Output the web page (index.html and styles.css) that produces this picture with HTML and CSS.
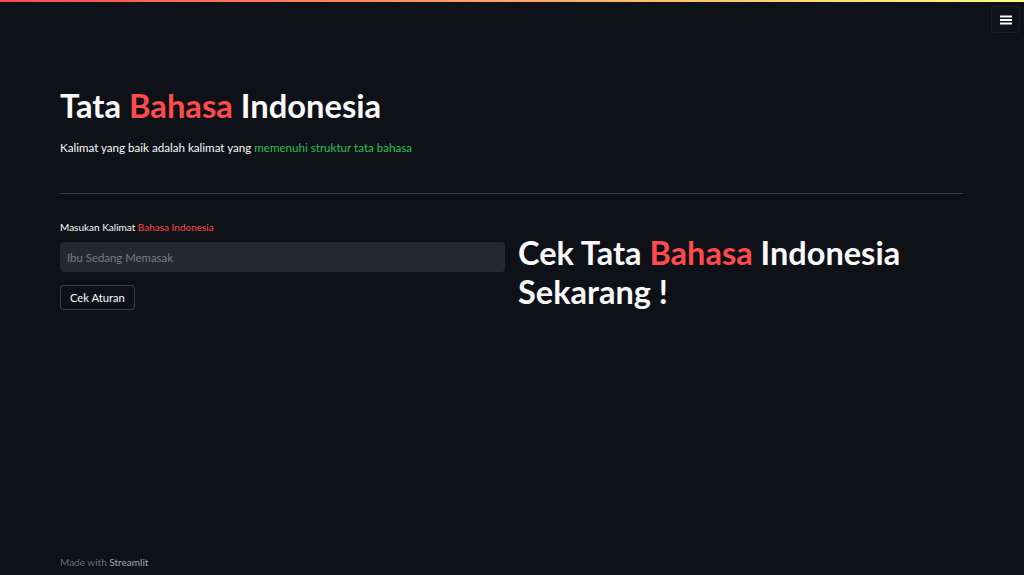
FILE: index.html
```html
<!DOCTYPE html>
<html>
<head>
<meta charset="utf-8">
<link rel="stylesheet" href="styles.css">
</head>
<body>
<div class="topbar"></div>
<button class="menu-btn" aria-label="menu">
  <svg width="14" height="14" viewBox="0 0 14 14"><rect x="1" y="2.5" width="12" height="2" fill="#fafafa"/><rect x="1" y="6" width="12" height="2" fill="#fafafa"/><rect x="1" y="9.5" width="12" height="2" fill="#fafafa"/></svg>
</button>
<main class="main">
  <h1 class="title">Tata <span class="red">Bahasa</span> Indonesia</h1>
  <p class="subtitle">Kalimat yang baik adalah kalimat yang <span class="green">memenuhi struktur tata bahasa</span></p>
  <hr class="divider">
  <div class="columns">
    <div class="col">
      <label class="label">Masukan Kalimat <span class="red">Bahasa Indonesia</span></label>
      <input class="input" type="text" placeholder="Ibu Sedang Memasak">
      <button class="btn">Cek Aturan</button>
    </div>
    <div class="col">
      <h2 class="heading">Cek Tata <span class="red">Bahasa</span> Indonesia Sekarang !</h2>
    </div>
  </div>
</main>
<footer class="footer">Made with <span class="brand">Streamlit</span></footer>
</body>
</html>
```
FILE: styles.css
```css
* { box-sizing: border-box; }
html, body { margin: 0; height: 100%; }
body {
  background: #0e1117;
  color: #fafafa;
  font-family: "Source Sans Pro", Lato, "Liberation Sans", sans-serif;
  position: relative;
  overflow: hidden;
}
.topbar {
  height: 2px;
  background: linear-gradient(90deg, #ff4b4b, #fffd80);
}
.menu-btn {
  position: absolute;
  top: 6px;
  right: 4px;
  width: 29px;
  height: 27px;
  background: #0e1117;
  border: 1px solid rgba(250,250,250,0.06);
  border-radius: 4px;
  display: flex;
  align-items: center;
  justify-content: center;
  padding: 0;
}
.main {
  padding: 84px 61px 0 60px;
}
.red { color: #ff4b4b; }
.green { color: #21c354; }
.title {
  margin: 0;
  font-size: 32.7px;
  font-weight: 700;
  line-height: 40px;
}
.subtitle {
  margin: 14px 0 0;
  font-size: 11.6px;
  line-height: 16px;
}
.divider {
  margin: 37px 0 0;
  border: none;
  border-top: 1px solid rgba(250,250,250,0.2);
}
.columns {
  display: flex;
  gap: 13px;
  margin-top: 26px;
}
.col {
  flex: 1;
  display: flex;
  flex-direction: column;
  align-items: flex-start;
}
.label {
  font-size: 10px;
  line-height: 14px;
}
.input {
  margin-top: 8px;
  width: 100%;
  height: 30px;
  background: #262730;
  border: none;
  border-radius: 4px;
  padding: 0 7px;
  font-family: inherit;
  font-size: 11.4px;
  color: #fafafa;
}
.input::placeholder { color: rgba(250,250,250,0.4); }
.btn {
  margin-top: 13px;
  height: 25px;
  padding: 0 9px;
  background: #0e1117;
  color: #fafafa;
  border: 1px solid rgba(250,250,250,0.2);
  border-radius: 4px;
  font-family: inherit;
  font-size: 11.2px;
}
.heading {
  margin: 13px 0 0;
  font-size: 32.5px;
  font-weight: 700;
  line-height: 39px;
}
.footer {
  position: absolute;
  left: 60px;
  bottom: 7px;
  font-size: 10px;
  color: rgba(250,250,250,0.4);
}
.brand { color: rgba(250,250,250,0.65); }
```
